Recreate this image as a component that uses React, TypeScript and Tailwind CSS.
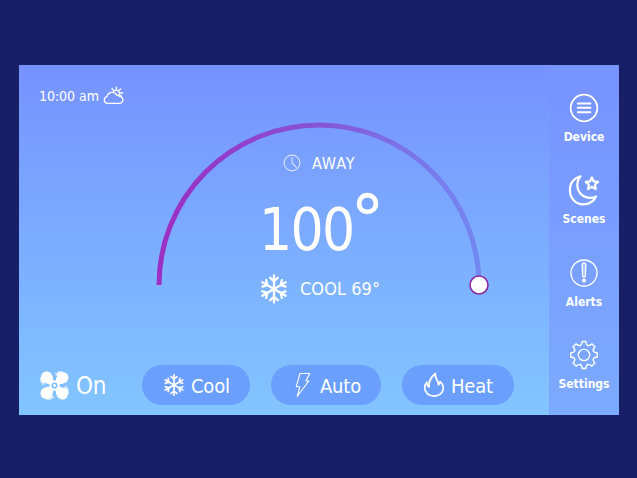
import React from "react";

type IconProps = { className?: string };

const stroke = {
  fill: "none",
  stroke: "currentColor",
  strokeLinecap: "round" as const,
  strokeLinejoin: "round" as const,
};

function WeatherIcon({ className }: IconProps) {
  return (
    <svg viewBox="0 0 22 20" className={className} {...stroke} strokeWidth="1.3">
      <path d="M5 17.4h12.2a3.4 3.4 0 0 0 .5-6.8 3 3 0 0 0-3-1.4A5.2 5.2 0 0 0 5 10.6a3.5 3.5 0 0 0 0 6.8z" />
      <path d="M11.2 6.2a3.2 3.2 0 1 1 5.6 3M14.4 3.4V1.2M17 4.4l1.7-1.5M18 7h2.6M17.6 9l1.9 1.3M11.8 4.4L10 2.8" />
    </svg>
  );
}

function MenuIcon({ className }: IconProps) {
  return (
    <svg viewBox="0 0 32 32" className={className} {...stroke} strokeWidth="1.8">
      <circle cx="16" cy="16" r="13.3" />
      <path d="M9.800 11.400h12.600M9.800 15.800h12.600M9.800 20.200h12.600" strokeWidth="2" />
    </svg>
  );
}

function MoonIcon({ className }: IconProps) {
  return (
    <svg viewBox="0 0 32 32" className={className} {...stroke} strokeWidth="2.2">
      <path d="M12.600 2.200C5.400 4.200 1.900 9.800 1.900 16.300c0 7.700 5.600 14 13.300 14 5.700 0 10.600-3 12.900-7.800-1.700.8-3.600 1.300-5.600 1.300-7.700 0-13.200-5.600-13.200-12.800 0-3.400 1.200-6.500 3.300-8.800z" />
      <path d="M23.900 3.500l1.900 3.900 4.300.5-3.200 2.900.9 4.200-3.900-2.100-3.900 2.100.9-4.200-3.200-2.900 4.300-.5z" />
    </svg>
  );
}

function AlertIcon({ className }: IconProps) {
  return (
    <svg viewBox="0 0 32 32" className={className} {...stroke} strokeWidth="1.300">
      <circle cx="16" cy="16" r="13" />
      <path d="M14.200 7.300q0-1.400 1.800-1.400t1.800 1.400l-.4 11.800q-.1 1-1.400 1t-1.400-1z" fill="currentColor" fillOpacity=".35" />
      <circle cx="16" cy="23.600" r="1.400" fill="currentColor" fillOpacity=".6" />
    </svg>
  );
}

function GearIcon({ className }: IconProps) {
  return (
    <svg viewBox="0 0 32 32" className={className} {...stroke} strokeWidth="1.300">
      <circle cx="16" cy="16" r="5.700" />
      <path d="M14.300 2.500h3.400q.4 3.200 1.700 3.700t3.900-1.500l2.800 2.700q-2 2.600-1.500 3.900t3.700 1.800v3.800q-3.200.4-3.700 1.700t1.500 3.900l-2.700 2.800q-2.600-2-3.900-1.500t-1.800 3.700h-3.400q-.5-3.200-1.800-3.700t-3.900 1.500l-2.700-2.800q2-2.600 1.500-3.900t-3.700-1.700v-3.800q3.200-.5 3.700-1.800t-1.500-3.900l2.800-2.700q2.600 2 3.900 1.500t1.700-3.700z" transform="translate(-1.280 -.2) scale(1.080)" />
    </svg>
  );
}

function ClockIcon({ className }: IconProps) {
  return (
    <svg viewBox="0 0 18 18" className={className} {...stroke} strokeWidth="1.100">
      <circle cx="9" cy="9" r="7.900" />
      <path d="M9 3.500v5.500l4.300 4.300" />
    </svg>
  );
}

const arms = [0, 60, 120, 180, 240, 300];

function SnowIcon({ className }: IconProps) {
  return (
    <svg viewBox="0 0 32 32" className={className} {...stroke} strokeWidth="2.300">
      {arms.map((angle) => (
        <path key={angle} d="M16 16V2.500M16 8.200l-3.800-3.400M16 8.200l3.800-3.400" transform={`rotate(${angle} 16 16)`} />
      ))}
    </svg>
  );
}

function FanIcon({ className }: IconProps) {
  return (
    <svg viewBox="0 0 32 32" className={className} fill="currentColor">
      {[0, 90, 180, 270].map((angle) => (
        <g key={angle} transform={`rotate(${angle} 16 16)`}>
          <path d="M11.200 14.700C6.500 14.300 2.600 11.500 2.300 7.600 2 3.700 5.200 1.200 8.600 1.600c4 .5 6.100 4.600 6.100 9.500q-2.300.9-3.500 3.600z" />
          <path d="M1.500 7.500v6.500q.6-2.500 1-3.300.1 3 .9 6.300.4-3 .7-4.500l1.400 3.400.4-3.200-3-6z" />
        </g>
      ))}
      <circle cx="16" cy="16" r="4.300" fill="none" stroke="currentColor" strokeWidth="2.200" />
      <circle cx="16" cy="16" r="1.500" />
    </svg>
  );
}

function BoltIcon({ className }: IconProps) {
  return (
    <svg viewBox="0 0 18 26" className={className} {...stroke} strokeWidth="1.100">
      <path d="M6 1.500h9.800l-3.900 7.500h2.900L3.200 24.500l2.600-9.700H2.200z" />
    </svg>
  );
}

function FlameIcon({ className }: IconProps) {
  return (
    <svg viewBox="0 0 22 26" className={className} {...stroke} strokeWidth="1.700">
      <path d="M11 24.100c-5.600 0-9.300-3.800-9.300-8.500 0-2.900 1.200-4.400 2.100-5.400.1 2.500.8 4 2.300 4.700C5.300 9.300 8.300 5 12.300 1.500c-.6 4.800 3.200 6.800 3.100 11.300 1.100-.6 1.500-1.800 1.600-3.100 2.100 1.700 3.300 4 3.300 6.400 0 4.600-4 8-9.300 8z" />
    </svg>
  );
}

const navItems = [
  { label: "Device", Icon: MenuIcon },
  { label: "Scenes", Icon: MoonIcon },
  { label: "Alerts", Icon: AlertIcon },
  { label: "Settings", Icon: GearIcon },
];

const modes = [
  { label: "Cool", Icon: SnowIcon, width: "w-[108px] pl-[20px] gap-[5px]", icon: "size-[24px]" },
  { label: "Auto", Icon: BoltIcon, width: "w-[110px] pl-[23px] gap-[8px]", icon: "w-[18px] h-[26px]" },
  { label: "Heat", Icon: FlameIcon, width: "w-[112px] pl-[21px] gap-[6px]", icon: "w-[22px] h-[26px]" },
];

function Dial() {
  return (
    <section className="ml-[130px] grid h-[200px] w-[340px]">
      <svg viewBox="0 0 340 200" className="col-start-1 row-start-1 h-[200px] w-[340px]">
        <defs>
          <linearGradient id="arc" x1="0" x2="1" y1="0" y2="0">
            <stop offset="0" stopColor="#9c2fc4" />
            <stop offset=".15" stopColor="#9438c9" />
            <stop offset=".5" stopColor="#8753d8" />
            <stop offset=".75" stopColor="#7c70e8" />
            <stop offset="1" stopColor="#7387f2" />
          </linearGradient>
        </defs>
        <path d="M10 165a160 160 0 0 1 320 0" fill="none" stroke="url(#arc)" strokeWidth="5" />
        <circle cx="330" cy="165" r="9" fill="#fff" stroke="#8a2ba4" strokeWidth="1.600" />
      </svg>
      <div className="col-start-1 row-start-1 flex flex-col items-start">
        <div className="mt-[33px] ml-[134px] flex h-5 items-center gap-[11px]">
          <ClockIcon className="size-[18px] opacity-70" />
          <span className="pt-px text-[16px] leading-5 tracking-[0.900px]">AWAY</span>
        </div>
        <div className="mt-[21px] ml-[110px] flex h-[68px] items-start">
          <span className="mt-[4px] text-[58px] leading-[64px] tracking-[-1.700px]">100</span>
          <span className="-mt-[6px] -ml-[3px] font-['DejaVu_Sans',sans-serif] text-[68px] leading-[64px] [font-stretch:normal] [-webkit-text-stroke:0.300px_white]">°</span>
        </div>
        <div className="mt-[11px] ml-[109px] flex h-8 items-center gap-[10px]">
          <SnowIcon className="size-[32px]" />
          <span className="text-[18px] leading-6 tracking-[0.050px]">COOL 69°</span>
        </div>
      </div>
    </section>
  );
}

export default function App() {
  return (
    <div className="h-[478px] w-[637px] overflow-hidden bg-[#172067] px-[19px] pt-[65px] font-['DejaVu_Sans_Condensed','DejaVu_Sans',sans-serif] [font-stretch:condensed] text-white">
      <div className="flex h-[350px] w-[600px] bg-linear-to-b from-[#7692ff] to-[#82c5ff]">
        <main className="flex w-[530px] flex-col">
          <header className="flex h-[55px] items-start gap-[3px] pt-[21px] pl-[20px]">
            <span className="text-[14px] leading-5 tracking-[-0.050px]">10:00 am</span>
            <WeatherIcon className="h-[20px] w-[22px]" />
          </header>
          <Dial />
          <footer className="mt-[45px] flex h-10 items-center pl-[20px]">
            <div className="flex w-[103px] items-center gap-[6px]">
              <FanIcon className="size-[31px]" />
              <span className="pt-px text-[24px] leading-8 tracking-[-0.300px]">On</span>
            </div>
            <div className="flex gap-[21px]">
              {modes.map(({ label, Icon, width, icon }) => (
                <button key={label} className={`flex h-10 items-center rounded-full bg-[#6b9ffd] ${width}`}>
                  <Icon className={icon} />
                  <span className="pt-px text-[20px] leading-7 tracking-[-0.200px]">{label}</span>
                </button>
              ))}
            </div>
          </footer>
        </main>
        <nav className="flex w-[70px] flex-col items-center bg-linear-to-b from-[#7793ff] to-[#7caaff] pt-[27px]">
          {navItems.map(({ label, Icon }) => (
            <a key={label} className="flex h-[82.300px] shrink-0 flex-col items-center">
              <Icon className="size-8 shrink-0" />
              <span className="mt-[5px] text-[12px] leading-4 font-bold">{label}</span>
            </a>
          ))}
        </nav>
      </div>
    </div>
  );
}
